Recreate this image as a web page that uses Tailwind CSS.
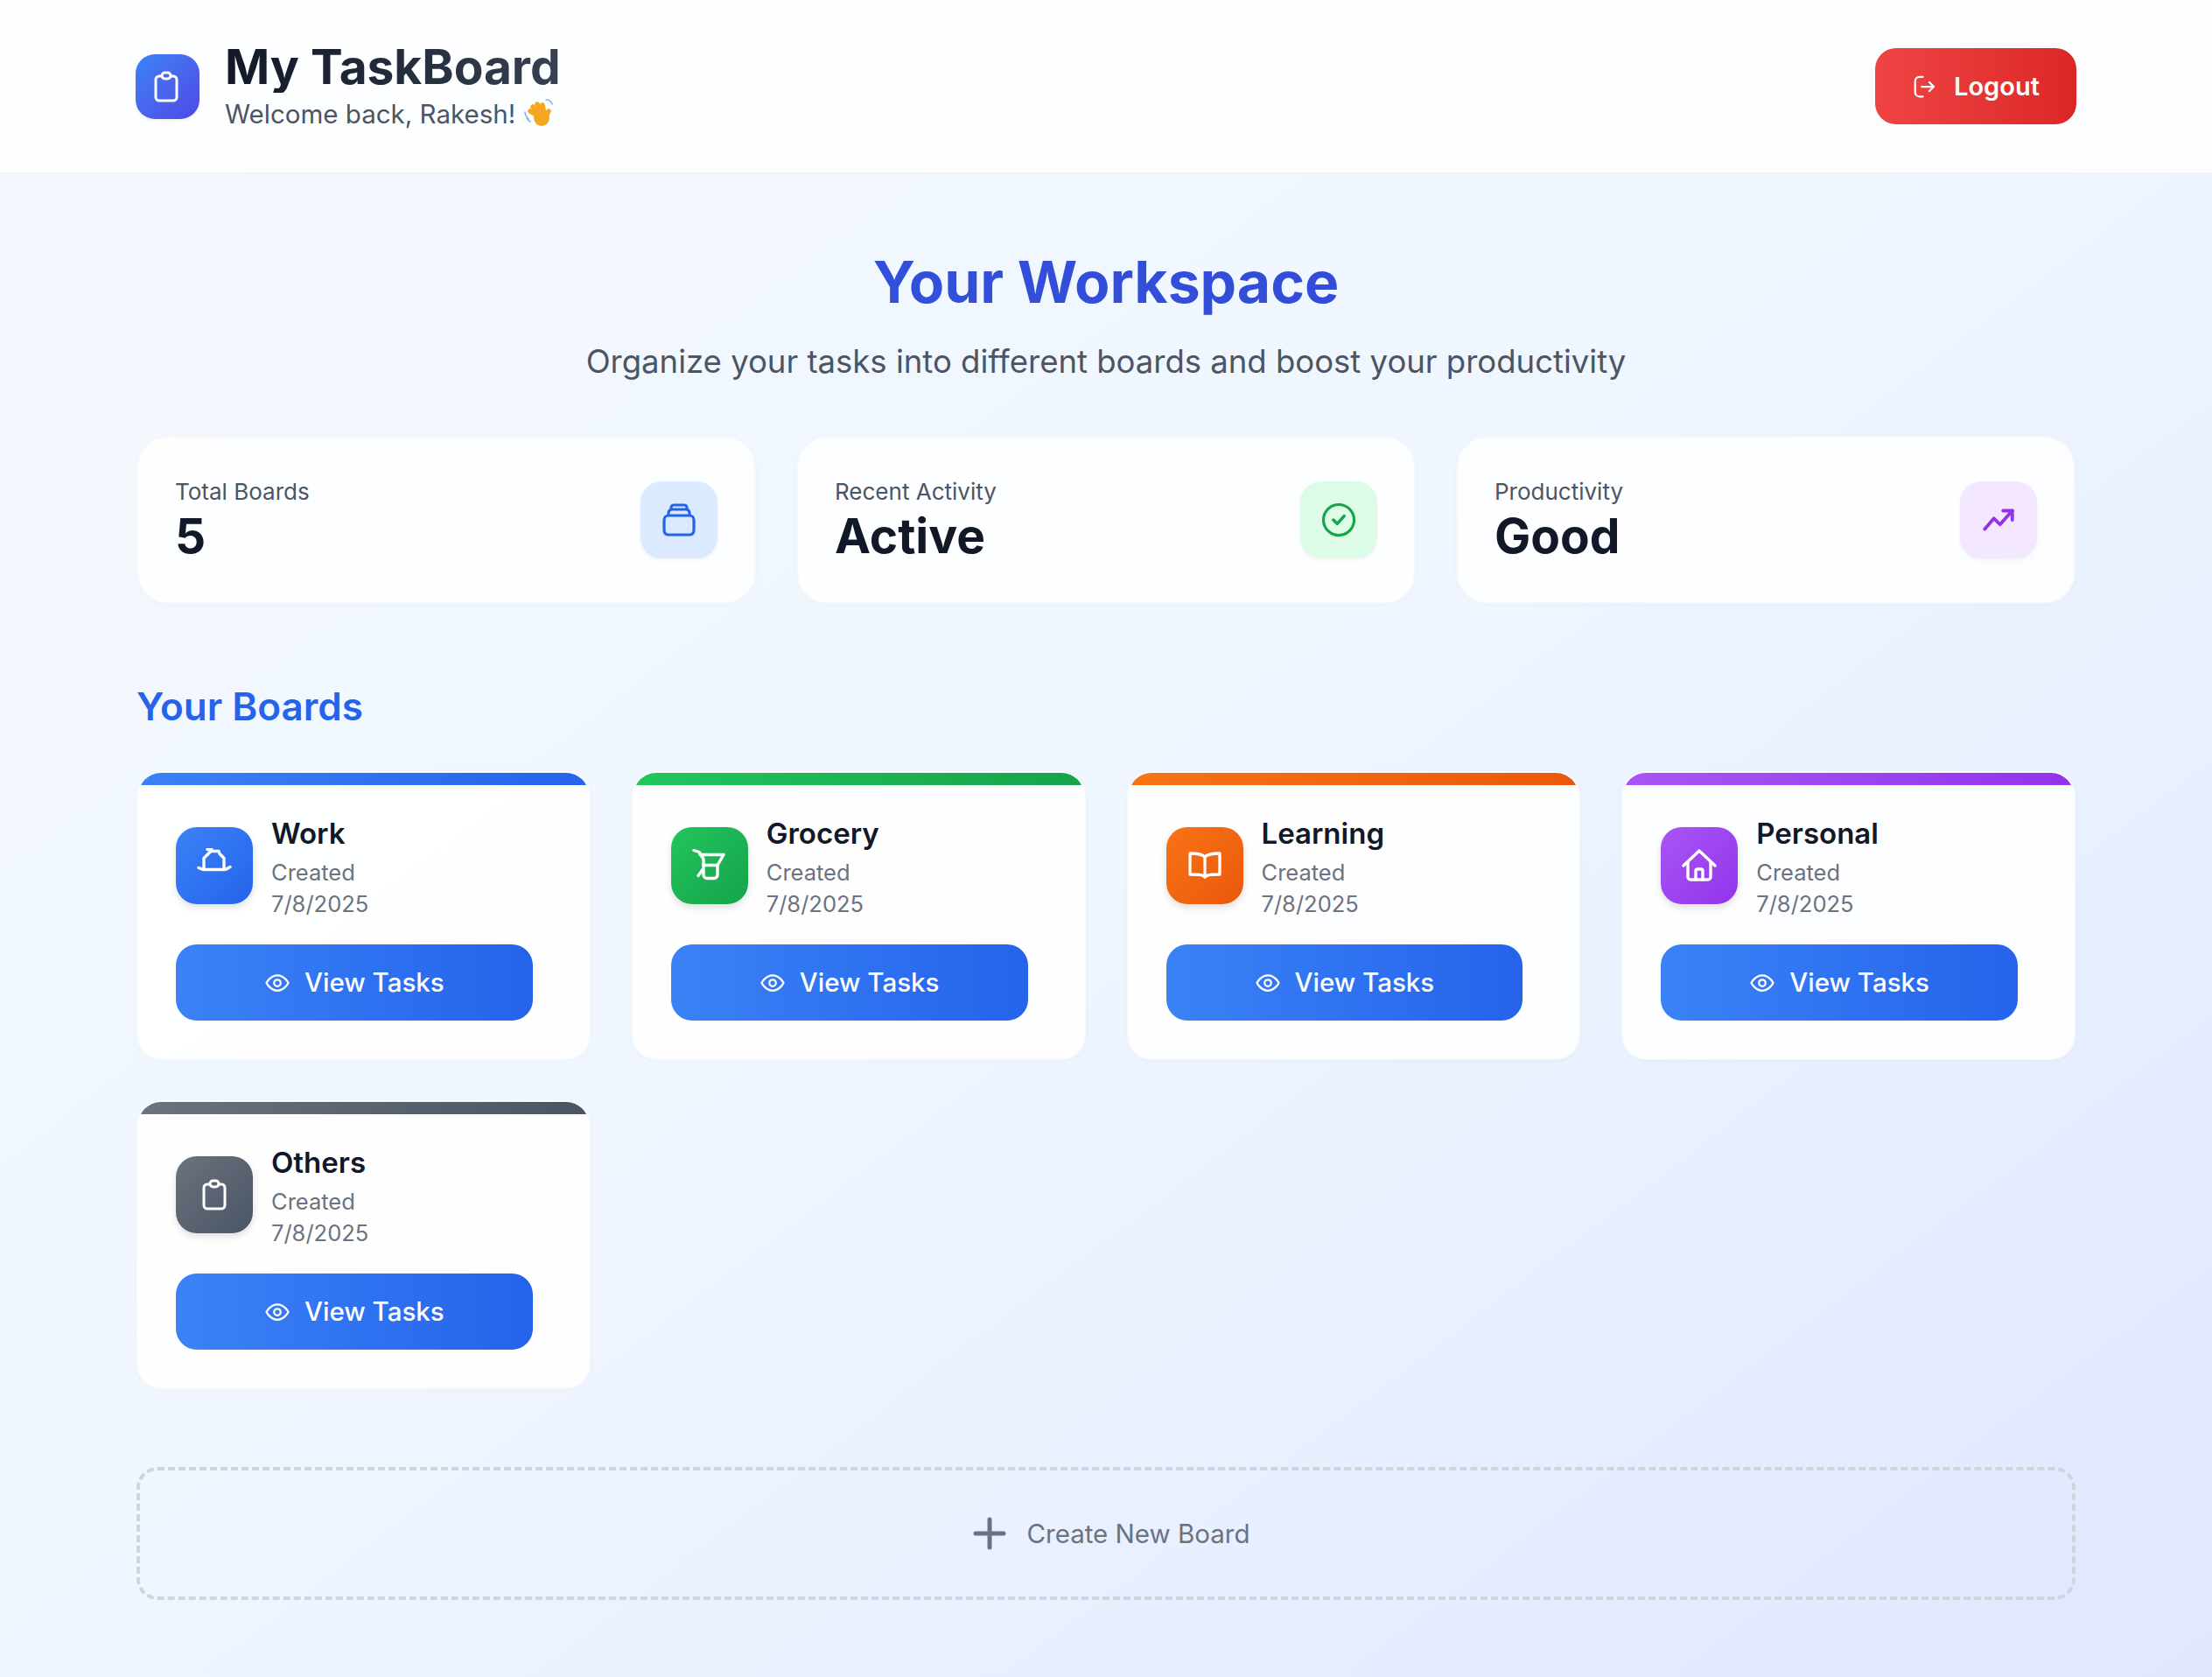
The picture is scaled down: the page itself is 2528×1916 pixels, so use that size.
<!DOCTYPE html>
<html lang="en">
<head>
  <meta charset="UTF-8" />
  <meta name="viewport" content="width=device-width, initial-scale=1" />
  <title>My TaskBoard</title>
  <script src="https://cdn.jsdelivr.net/npm/@tailwindcss/browser@4"></script>
</head>
<body class="min-h-screen bg-linear-to-br from-[#f5f9fe] via-[#eff6ff] to-[#e0e7ff] font-['Inter','Noto_Sans',sans-serif]">

  <!-- header -->
  <header class="h-[199px] bg-white/80 border-b-2 border-[#e5e7eb]/50 px-[155px] flex items-center justify-between">
    <div class="flex items-center gap-[29px]">
      <div class="w-[73px] h-[74px] rounded-[22px] bg-linear-to-br from-[#3b82f6] to-[#4f46e5] flex items-center justify-center shadow-[0_2px_4px_rgba(0,0,0,0.06)]">
        <svg class="w-[28px] h-[36px] mr-1" viewBox="0 0 28 36" fill="none" stroke="white" stroke-width="3" stroke-linecap="round" stroke-linejoin="round"><path d="M9 6H6a4 4 0 0 0-4 4v20a4 4 0 0 0 4 4h16a4 4 0 0 0 4-4V10a4 4 0 0 0-4-4h-3"/><rect x="9" y="2" width="10" height="7" rx="3.5"/></svg>
      </div>
      <div>
        <h1 class="text-[55px] leading-[60px] font-bold bg-linear-to-r from-[#111827] to-[#374151] bg-clip-text text-transparent w-max">My TaskBoard</h1>
        <p class="mt-[3px] text-[29.5px] leading-[42px] text-[#4b5563] flex items-center gap-[10px]">Welcome back, Rakesh!
          <svg class="w-[34px] h-[34px]" viewBox="0 0 34 34" fill="none" stroke-linecap="round"><g stroke="#f5a623" stroke-width="5.5"><path d="M19 21 7 14"/><path d="M20 20 10 9"/><path d="M21 19 15 6"/><path d="M23 18 21 7"/><path d="M25 20l3-6"/></g><circle cx="20" cy="22" r="9" fill="#f5a623"/><path d="M1 15c0 3 2 6 4 8M3 22c1 2 2 3 4 4M25 1c3 0 6 2 7 5" stroke="#7fb2e5" stroke-width="1.6"/></svg>
        </p>
      </div>
    </div>
    <button class="w-[230px] h-[87px] rounded-[24px] bg-linear-to-r from-[#ef4444] to-[#dc2626] text-white text-[29px] font-semibold flex items-center justify-center gap-[18px]">
      <svg class="w-[30px] h-[30px]" viewBox="0 0 24 24" fill="none" stroke="white" stroke-width="1.8" stroke-linecap="round" stroke-linejoin="round"><path d="M10 21H7a4 4 0 0 1-4-4V7a4 4 0 0 1 4-4h3"/><path d="M16 8l4 4-4 4"/><path d="M20 12H9"/></svg>
      Logout
    </button>
  </header>

  <main class="px-[156px] pt-[81px]">
    <!-- hero -->
    <div class="text-center">
      <h2 class="text-[66px] leading-[84px] font-bold bg-linear-to-r from-[#2f55dc] to-[#3547d6] bg-clip-text text-transparent">Your Workspace</h2>
      <p class="mt-[25px] text-[36.5px] leading-[48px] text-[#4b5563]">Organize your tasks into different boards and boost your productivity</p>
    </div>

    <!-- stats -->
    <div class="mt-[61px] grid grid-cols-3 gap-[46px]">
      <div class="h-[192px] rounded-[36px] bg-white/85 border-2 border-[#e5e7eb]/30 px-[42px] flex items-center justify-between shadow-[0_1px_4px_rgba(0,0,0,0.03)]">
        <div>
          <p class="text-[26px] leading-[36px] text-[#4b5563]">Total Boards</p>
          <p class="text-[55px] leading-[64px] font-bold text-[#111827]">5</p>
        </div>
        <div class="w-[88px] h-[88px] rounded-[24px] bg-[#dbeafe] flex items-center justify-center shadow-[0_2px_4px_rgba(0,0,0,0.05)]">
          <svg class="w-[40px] h-[40px]" viewBox="0 0 40 40" fill="none" stroke="#2563eb" stroke-width="3.2" stroke-linejoin="round"><rect x="3" y="15" width="34" height="22" rx="5"/><path d="M8 15v-3a4 4 0 0 1 4-4h16a4 4 0 0 1 4 4v3"/><path d="M11 8V6a3 3 0 0 1 3-3h12a3 3 0 0 1 3 3v2"/></svg>
        </div>
      </div>
      <div class="h-[192px] rounded-[36px] bg-white/85 border-2 border-[#e5e7eb]/30 px-[42px] flex items-center justify-between shadow-[0_1px_4px_rgba(0,0,0,0.03)]">
        <div>
          <p class="text-[26px] leading-[36px] text-[#4b5563]">Recent Activity</p>
          <p class="text-[55px] leading-[64px] font-bold text-[#111827]">Active</p>
        </div>
        <div class="w-[88px] h-[88px] rounded-[24px] bg-[#dcfce7] flex items-center justify-center shadow-[0_2px_4px_rgba(0,0,0,0.05)]">
          <svg class="w-[42px] h-[42px]" viewBox="0 0 24 24" fill="none" stroke="#16a34a" stroke-width="1.8" stroke-linecap="round" stroke-linejoin="round"><circle cx="12" cy="12" r="10"/><path d="m8.5 12 2.5 2.5 4.5-5" stroke-width="2"/></svg>
        </div>
      </div>
      <div class="h-[192px] rounded-[36px] bg-white/85 border-2 border-[#e5e7eb]/30 px-[42px] flex items-center justify-between shadow-[0_1px_4px_rgba(0,0,0,0.03)]">
        <div>
          <p class="text-[26px] leading-[36px] text-[#4b5563]">Productivity</p>
          <p class="text-[55px] leading-[64px] font-bold text-[#111827]">Good</p>
        </div>
        <div class="w-[88px] h-[88px] rounded-[24px] bg-[#f3e8ff] flex items-center justify-center shadow-[0_2px_4px_rgba(0,0,0,0.05)]">
          <svg class="w-[42px] h-[42px]" viewBox="0 0 24 24" fill="none" stroke="#9333ea" stroke-width="2.2" stroke-linecap="round" stroke-linejoin="round"><path d="m3 18 6-7 4 4 8-9"/><path d="M15 6h6v6"/></svg>
        </div>
      </div>
    </div>

    <!-- boards -->
    <h3 class="mt-[91px] text-[44px] leading-[52px] font-semibold text-[#2563eb]">Your Boards</h3>

    <div class="mt-[48px] grid grid-cols-4 gap-x-[47px] gap-y-[46px]">
      <div class="h-[330px] rounded-[28px] bg-white/90 border-2 border-[#f3f4f6]/40 overflow-hidden shadow-[0_1px_4px_rgba(0,0,0,0.03)]">
        <div class="h-[14px] bg-linear-to-r from-[#3b82f6] to-[#2563eb]"></div>
        <div class="pl-[43px] pr-[64px] pt-[33px]">
          <div class="flex items-start gap-[21px]">
            <div class="mt-[15px] w-[88px] h-[88px] rounded-[24px] bg-linear-to-br from-[#3b82f6] to-[#2563eb] flex items-center justify-center shadow-[0_4px_8px_rgba(0,0,0,0.12)]">
              <svg class="w-[40px] h-[40px]" viewBox="5 8.5 40 40" fill="none" stroke="white" stroke-width="3.4" stroke-linecap="round" stroke-linejoin="round"><path d="M17 10h5v2h8l1 3 5 5v11"/><path d="M21 12l-8 8v11"/><path d="M7 31c3 1 4 2 7 2h22c3 0 5-2 7-3"/></svg>
            </div>
            <div>
              <p class="text-[33px] leading-[44px] font-semibold text-[#111827]">Work</p>
              <p class="mt-[5px] text-[25.5px] leading-[36px] text-[#6b7280]">Created<br />7/8/2025</p>
            </div>
          </div>
          <button class="mt-[28px] w-full h-[87px] rounded-[24px] bg-linear-to-r from-[#3b82f6] to-[#2563eb] text-white text-[29.5px] font-medium flex items-center justify-center gap-[16px]">
            <svg class="w-[30px] h-[30px]" viewBox="0 0 24 24" fill="none" stroke="white" stroke-width="1.8" stroke-linecap="round" stroke-linejoin="round"><path d="M2 12s3.5-7 10-7 10 7 10 7-3.5 7-10 7-10-7-10-7Z"/><circle cx="12" cy="12" r="3"/></svg>
            View Tasks
          </button>
        </div>
      </div>

      <div class="h-[330px] rounded-[28px] bg-white/90 border-2 border-[#f3f4f6]/40 overflow-hidden shadow-[0_1px_4px_rgba(0,0,0,0.03)]">
        <div class="h-[14px] bg-linear-to-r from-[#22c55e] to-[#16a34a]"></div>
        <div class="pl-[43px] pr-[64px] pt-[33px]">
          <div class="flex items-start gap-[21px]">
            <div class="mt-[15px] w-[88px] h-[88px] rounded-[24px] bg-linear-to-br from-[#22c55e] to-[#16a34a] flex items-center justify-center shadow-[0_4px_8px_rgba(0,0,0,0.12)]">
              <svg class="w-[40px] h-[40px]" viewBox="5 8.5 40 40" fill="none" stroke="white" stroke-width="3.4" stroke-linecap="round" stroke-linejoin="round"><path d="M7 11l6 2 5 8v18a4 4 0 0 0 4 4h8a4 4 0 0 0 4-4V28l7-12H14"/><path d="M18 28h16"/><path d="M17 33l-5 7"/></svg>
            </div>
            <div>
              <p class="text-[33px] leading-[44px] font-semibold text-[#111827]">Grocery</p>
              <p class="mt-[5px] text-[25.5px] leading-[36px] text-[#6b7280]">Created<br />7/8/2025</p>
            </div>
          </div>
          <button class="mt-[28px] w-full h-[87px] rounded-[24px] bg-linear-to-r from-[#3b82f6] to-[#2563eb] text-white text-[29.5px] font-medium flex items-center justify-center gap-[16px]">
            <svg class="w-[30px] h-[30px]" viewBox="0 0 24 24" fill="none" stroke="white" stroke-width="1.8" stroke-linecap="round" stroke-linejoin="round"><path d="M2 12s3.5-7 10-7 10 7 10 7-3.5 7-10 7-10-7-10-7Z"/><circle cx="12" cy="12" r="3"/></svg>
            View Tasks
          </button>
        </div>
      </div>

      <div class="h-[330px] rounded-[28px] bg-white/90 border-2 border-[#f3f4f6]/40 overflow-hidden shadow-[0_1px_4px_rgba(0,0,0,0.03)]">
        <div class="h-[14px] bg-linear-to-r from-[#f97316] to-[#ea580c]"></div>
        <div class="pl-[43px] pr-[64px] pt-[33px]">
          <div class="flex items-start gap-[21px]">
            <div class="mt-[15px] w-[88px] h-[88px] rounded-[24px] bg-linear-to-br from-[#f97316] to-[#ea580c] flex items-center justify-center shadow-[0_4px_8px_rgba(0,0,0,0.12)]">
              <svg class="w-[40px] h-[40px]" viewBox="0 0 40 40" fill="none" stroke="white" stroke-width="3.3" stroke-linecap="round" stroke-linejoin="round"><path d="M20 10c-3-3-8-4-17-4v24c9 0 14 0 17 3 3-3 8-3 17-3V6c-9 0-14 1-17 4Z"/><path d="M20 10v23"/></svg>
            </div>
            <div>
              <p class="text-[33px] leading-[44px] font-semibold text-[#111827]">Learning</p>
              <p class="mt-[5px] text-[25.5px] leading-[36px] text-[#6b7280]">Created<br />7/8/2025</p>
            </div>
          </div>
          <button class="mt-[28px] w-full h-[87px] rounded-[24px] bg-linear-to-r from-[#3b82f6] to-[#2563eb] text-white text-[29.5px] font-medium flex items-center justify-center gap-[16px]">
            <svg class="w-[30px] h-[30px]" viewBox="0 0 24 24" fill="none" stroke="white" stroke-width="1.8" stroke-linecap="round" stroke-linejoin="round"><path d="M2 12s3.5-7 10-7 10 7 10 7-3.5 7-10 7-10-7-10-7Z"/><circle cx="12" cy="12" r="3"/></svg>
            View Tasks
          </button>
        </div>
      </div>

      <div class="h-[330px] rounded-[28px] bg-white/90 border-2 border-[#f3f4f6]/40 overflow-hidden shadow-[0_1px_4px_rgba(0,0,0,0.03)]">
        <div class="h-[14px] bg-linear-to-r from-[#a855f7] to-[#9333ea]"></div>
        <div class="pl-[43px] pr-[64px] pt-[33px]">
          <div class="flex items-start gap-[21px]">
            <div class="mt-[15px] w-[88px] h-[88px] rounded-[24px] bg-linear-to-br from-[#a855f7] to-[#9333ea] flex items-center justify-center shadow-[0_4px_8px_rgba(0,0,0,0.12)]">
              <svg class="w-[40px] h-[40px]" viewBox="0 0 40 40" fill="none" stroke="white" stroke-width="3.4" stroke-linecap="round" stroke-linejoin="round"><path d="M2 20 20 3l18 17"/><path d="M7 16v17a3 3 0 0 0 3 3h20a3 3 0 0 0 3-3V16"/><path d="M16 36V26a2 2 0 0 1 2-2h4a2 2 0 0 1 2 2v10"/></svg>
            </div>
            <div>
              <p class="text-[33px] leading-[44px] font-semibold text-[#111827]">Personal</p>
              <p class="mt-[5px] text-[25.5px] leading-[36px] text-[#6b7280]">Created<br />7/8/2025</p>
            </div>
          </div>
          <button class="mt-[28px] w-full h-[87px] rounded-[24px] bg-linear-to-r from-[#3b82f6] to-[#2563eb] text-white text-[29.5px] font-medium flex items-center justify-center gap-[16px]">
            <svg class="w-[30px] h-[30px]" viewBox="0 0 24 24" fill="none" stroke="white" stroke-width="1.8" stroke-linecap="round" stroke-linejoin="round"><path d="M2 12s3.5-7 10-7 10 7 10 7-3.5 7-10 7-10-7-10-7Z"/><circle cx="12" cy="12" r="3"/></svg>
            View Tasks
          </button>
        </div>
      </div>

      <div class="h-[330px] rounded-[28px] bg-white/90 border-2 border-[#f3f4f6]/40 overflow-hidden shadow-[0_1px_4px_rgba(0,0,0,0.03)]">
        <div class="h-[14px] bg-linear-to-r from-[#6b7280] to-[#4b5563]"></div>
        <div class="pl-[43px] pr-[64px] pt-[33px]">
          <div class="flex items-start gap-[21px]">
            <div class="mt-[15px] w-[88px] h-[88px] rounded-[24px] bg-linear-to-br from-[#6b7280] to-[#4b5563] flex items-center justify-center shadow-[0_4px_8px_rgba(0,0,0,0.12)]">
              <svg class="w-[28px] h-[36px]" viewBox="0 0 28 36" fill="none" stroke="white" stroke-width="3" stroke-linecap="round" stroke-linejoin="round"><path d="M9 6H6a4 4 0 0 0-4 4v20a4 4 0 0 0 4 4h16a4 4 0 0 0 4-4V10a4 4 0 0 0-4-4h-3"/><rect x="9" y="2" width="10" height="7" rx="3.5"/></svg>
            </div>
            <div>
              <p class="text-[33px] leading-[44px] font-semibold text-[#111827]">Others</p>
              <p class="mt-[5px] text-[25.5px] leading-[36px] text-[#6b7280]">Created<br />7/8/2025</p>
            </div>
          </div>
          <button class="mt-[28px] w-full h-[87px] rounded-[24px] bg-linear-to-r from-[#3b82f6] to-[#2563eb] text-white text-[29.5px] font-medium flex items-center justify-center gap-[16px]">
            <svg class="w-[30px] h-[30px]" viewBox="0 0 24 24" fill="none" stroke="white" stroke-width="1.8" stroke-linecap="round" stroke-linejoin="round"><path d="M2 12s3.5-7 10-7 10 7 10 7-3.5 7-10 7-10-7-10-7Z"/><circle cx="12" cy="12" r="3"/></svg>
            View Tasks
          </button>
        </div>
      </div>
    </div>

    <!-- create -->
    <button class="mt-[89px] w-full h-[152px] rounded-[24px] border-4 border-dashed border-[#d1d5db] text-[29.5px] text-[#6b7280] flex items-center justify-center gap-[24px] pl-[12px]">
      <svg class="w-[38px] h-[38px]" viewBox="0 0 38 38" fill="none" stroke="#6b7280" stroke-width="5" stroke-linecap="round"><path d="M19 3v32M3 19h32"/></svg>
      Create New Board
    </button>
  </main>
</body>
</html>
